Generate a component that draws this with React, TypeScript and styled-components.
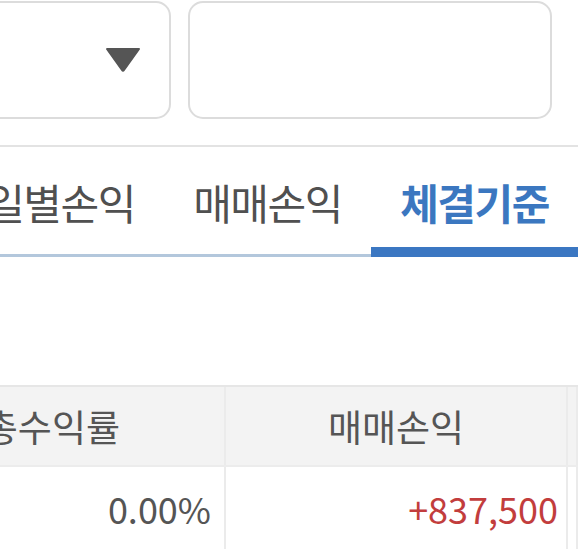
import React from "react";
import styled, { createGlobalStyle } from "styled-components";

const Global = createGlobalStyle`
  html, body { margin: 0; padding: 0; background: #ffffff; }
  body { font-family: "Noto Sans CJK KR", "Noto Sans", sans-serif; }
`;

const Page = styled.div`
  width: 578px;
  height: 549px;
  overflow: hidden;
  background: #ffffff;
  display: flex;
  flex-direction: column;
`;

const FilterRow = styled.div`
  display: flex;
  gap: 17px;
  margin-left: -40px;
  padding-top: 1px;
`;

const SelectBox = styled.div`
  box-sizing: border-box;
  width: 211px;
  height: 118px;
  border: 2px solid #dcdcdc;
  border-radius: 15px;
  background: #fff;
  display: flex;
  align-items: center;
  justify-content: flex-end;
  padding-right: 28px;
  padding-bottom: 2px;
`;

const InputBox = styled.div`
  box-sizing: border-box;
  width: 364px;
  height: 118px;
  border: 2px solid #dcdcdc;
  border-radius: 15px;
  background: #fff;
`;

const Separator = styled.div`
  margin-top: 26px;
  height: 2px;
  background: #e3e3e3;
`;

const TabList = styled.div`
  display: flex;
  margin-left: -43px;
  height: 113px;
  border-bottom: 3px solid #b3c7dc;
  box-sizing: border-box;
`;

const Tab = styled.div<{ $active?: boolean }>`
  position: relative;
  flex: 0 0 207px;
  display: flex;
  align-items: center;
  justify-content: center;
  padding-top: 2px;
  font-size: 42px;
  font-weight: ${(p) => (p.$active ? 700 : 400)};
  color: ${(p) => (p.$active ? "#3b77c0" : "#505050")};
  letter-spacing: -1.5px;
  &::after {
    content: "";
    display: ${(p) => (p.$active ? "block" : "none")};
    position: absolute;
    left: 0;
    right: 0;
    bottom: -3px;
    height: 10px;
    background: #3b77c2;
  }
`;

const Table = styled.div`
  margin-top: 128px;
  border-top: 2px solid #e6e6e6;
`;

const Row = styled.div<{ $head?: boolean }>`
  display: grid;
  grid-template-columns: 226px 342px 10px;
  height: ${(p) => (p.$head ? "78px" : "82px")};
  background: ${(p) => (p.$head ? "#f3f3f3" : "#ffffff")};
  border-bottom: ${(p) => (p.$head ? "2px solid #ececec" : "none")};
`;

const Cell = styled.div<{ $align?: "left" | "center" | "right"; $pad?: number; $color?: string; $size?: number }>`
  display: flex;
  align-items: center;
  justify-content: ${(p) =>
    p.$align === "right" ? "flex-end" : p.$align === "center" ? "center" : "flex-start"};
  padding-right: ${(p) => p.$pad ?? 0}px;
  border-right: 2px solid #ebebeb;
  font-size: ${(p) => p.$size ?? 36}px;
  color: ${(p) => p.$color ?? "#555555"};
  white-space: nowrap;
  overflow: hidden;
`;

const Caret = () => (
  <svg width="36" height="25" viewBox="0 0 36 25">
    <path d="M2 2 L34 2 L19 23 Q18 24.5 17 23 Z" fill="#555" stroke="#555" strokeWidth="2" strokeLinejoin="round" />
  </svg>
);

export default function App() {
  return (
    <Page>
      <Global />
      <FilterRow>
        <SelectBox>
          <Caret />
        </SelectBox>
        <InputBox />
      </FilterRow>
      <Separator />
      <TabList>
        <Tab>일별손익</Tab>
        <Tab>매매손익</Tab>
        <Tab $active>체결기준</Tab>
      </TabList>
      <Table>
        <Row $head>
          <Cell $align="right" $pad={104} $size={37}>총수익률</Cell>
          <Cell $align="center" $size={37}>매매손익</Cell>
          <Cell />
        </Row>
        <Row>
          <Cell $align="right" $pad={13}>0.00%</Cell>
          <Cell $align="right" $pad={8} $color="#c23d3d">+837,500</Cell>
          <Cell />
        </Row>
      </Table>
    </Page>
  );
}
